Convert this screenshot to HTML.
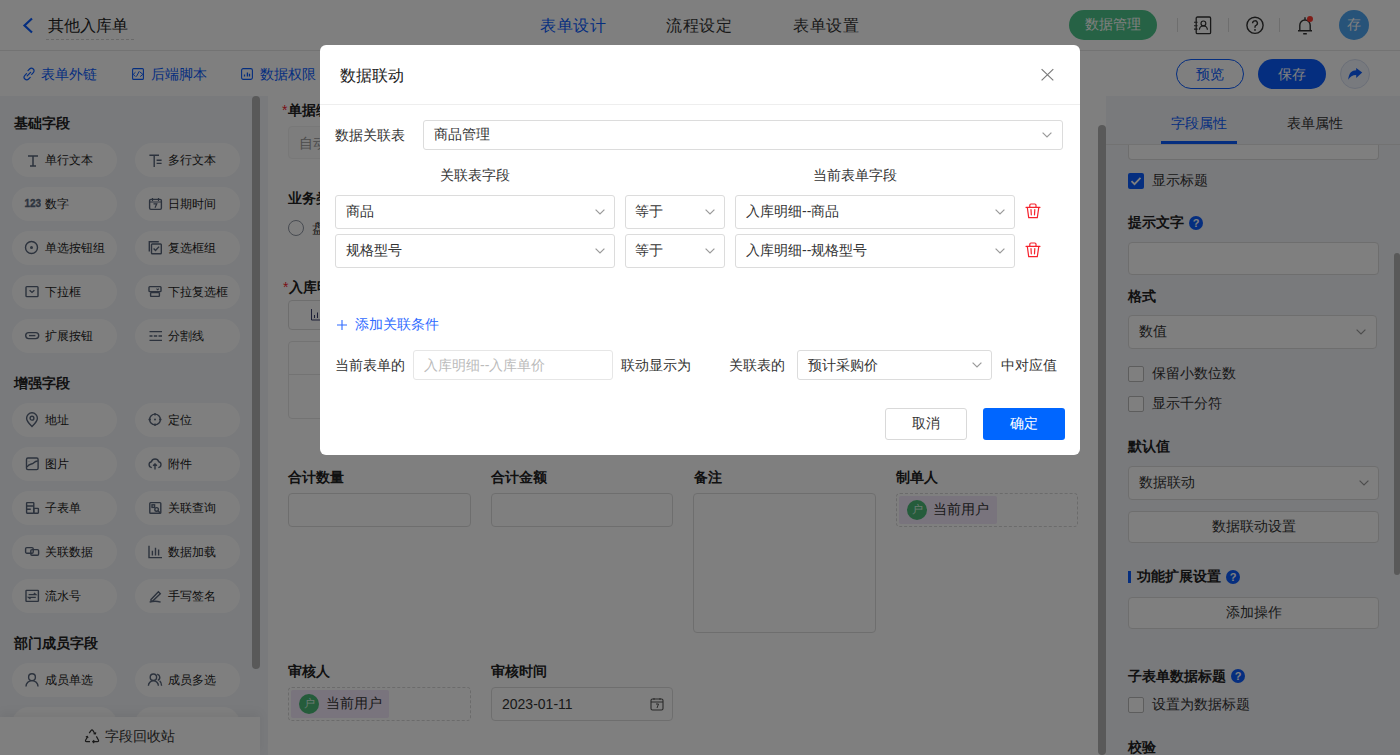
<!DOCTYPE html>
<html><head><meta charset="utf-8">
<style>
*{box-sizing:border-box;margin:0;padding:0}
html,body{width:1400px;height:755px;overflow:hidden;background:#fff;font-family:"Liberation Sans",sans-serif;color:#333}
.a{position:absolute}
.t{position:absolute;white-space:nowrap;line-height:1}
.b{font-weight:bold}
#hdr{left:0;top:0;width:1400px;height:51px;background:#fff;border-bottom:1px solid #e6e6e6}
#tb{left:0;top:51px;width:1400px;height:45px;background:#fff}
#lp{left:0;top:96px;width:268px;height:659px;background:#f2f4f8}
#cp{left:268px;top:96px;width:838px;height:659px;background:#fff}
#rp{left:1106px;top:96px;width:294px;height:659px;background:#f2f4f8}
.pill{position:absolute;width:105px;height:34px;border-radius:17px;background:#fff}
.pill .ic{position:absolute;left:12px;top:9px}
.pill span{position:absolute;left:33px;top:11px;font-size:12px;line-height:12px;color:#222;white-space:nowrap}
.sec{position:absolute;left:14px;font-size:14px;line-height:14px;font-weight:bold;color:#222}
.inp{position:absolute;border:1px solid #ddd;border-radius:4px;background:#fff}
.mask{position:absolute;left:0;top:0;width:1400px;height:755px;background:rgba(0,0,0,.5)}
#modal{left:320px;top:45px;width:760px;height:410px;background:#fff;border-radius:6px}
.sel{position:absolute;border:1px solid #dcdcdc;border-radius:3px;background:#fff}
.chev{position:absolute;width:10px;height:6px}
.qm{width:14px;height:14px;border-radius:7px;background:#0a5cff}
.qm:after{content:"?";position:absolute;left:0;top:1px;width:14px;text-align:center;font-size:11px;line-height:12px;font-weight:bold;color:#fff}
</style></head><body>
<!-- HEADER -->
<div id="hdr" class="a">
  <svg class="a" style="left:22px;top:17px" width="12" height="17" viewBox="0 0 12 17"><path d="M10 1.5 L2.5 8.5 L10 15.5" fill="none" stroke="#0a5cff" stroke-width="2.2"/></svg>
  <div class="t" style="left:48px;top:18px;font-size:16px;line-height:16px;color:#222">其他入库单</div>
  <div class="a" style="left:46px;top:39px;width:88px;border-top:1px dashed #d2d2d2"></div>
  <div class="t" style="left:540px;top:18px;font-size:16px;line-height:16px;letter-spacing:.5px;color:#0a5cff">表单设计</div>
  <div class="t" style="left:666px;top:18px;font-size:16px;line-height:16px;letter-spacing:.5px;color:#333">流程设定</div>
  <div class="t" style="left:793px;top:18px;font-size:16px;line-height:16px;letter-spacing:.5px;color:#333">表单设置</div>
  <div class="a" style="left:1069px;top:10px;width:88px;height:30px;border-radius:15px;background:#4cc58a"></div>
  <div class="t" style="left:1085px;top:17px;font-size:14px;line-height:14px;color:#fff">数据管理</div>
  <div class="a" style="left:1177px;top:18px;width:1px;height:14px;background:#ddd"></div>
  <div class="a" style="left:1228px;top:18px;width:1px;height:14px;background:#ddd"></div>
  <div class="a" style="left:1279px;top:18px;width:1px;height:14px;background:#ddd"></div>
  <svg class="a" style="left:1193px;top:15px" width="19" height="20" viewBox="0 0 19 20" fill="none" stroke="#333"><rect x="3.2" y="2" width="14.4" height="16.7" rx="1.2" stroke-width="1.3"/><path d="M1 7.3h3.6M1 10.7h3.6M1 14.1h3.6" stroke-width="1.1"/><circle cx="10.4" cy="8.4" r="2.4" stroke-width="1.2"/><path d="M6.4 14.8a4 4 0 0 1 8 0" stroke-width="1.2"/></svg>
  <svg class="a" style="left:1245px;top:16px" width="19" height="19" viewBox="0 0 19 19" fill="none" stroke="#333" stroke-width="1.4"><circle cx="10" cy="9.3" r="8.1"/><path d="M7.6 7.2a2.4 2.4 0 1 1 3.4 2.2c-.7.3-1 .8-1 1.5v.8"/><circle cx="10" cy="13.9" r=".9" fill="#333" stroke="none"/></svg>
  <svg class="a" style="left:1297px;top:15px" width="18" height="20" viewBox="0 0 18 20" fill="none" stroke="#333" stroke-width="1.4"><path d="M1 15.7H15M2.8 15.7V10.2a5.2 5.2 0 0 1 10.4 0v5.5M8 2.2v2.4M6.2 18.7h3.6"/><circle cx="13" cy="4" r="3" fill="#ff3b30" stroke="none"/></svg>
  <div class="a" style="left:1339px;top:10px;width:30px;height:30px;border-radius:15px;background:#4ea6f2"></div>
  <div class="t" style="left:1347px;top:17px;font-size:14px;line-height:14px;color:#fff">存</div>
</div>
<!-- TOOLBAR -->
<div id="tb" class="a">
  <svg class="a" style="left:22px;top:16px" width="14" height="14" viewBox="0 0 14 14"><path d="M6 3.6l1.6-1.6a2.6 2.6 0 0 1 3.7 3.7L9.7 7.3M8.2 10.4L6.6 12a2.6 2.6 0 0 1-3.7-3.7L4.5 6.7M5.2 8.8l3.4-3.4" fill="none" stroke="#0a5cff" stroke-width="1.2" stroke-linecap="round"/></svg>
  <div class="t" style="left:41px;top:16px;font-size:14px;line-height:14px;color:#0a5cff">表单外链</div>
  <svg class="a" style="left:132px;top:17px" width="12" height="12" viewBox="0 0 12 12" fill="none" stroke="#0a5cff"><rect x=".6" y=".6" width="10.8" height="10.8" rx="1" stroke-width="1.1"/><path d="M3.5 4.2L1.2 6.4l2.3 2.2M7.3 3.2L4.4 8.6M7.9 3.9l3 2.5-2.7 2.2" stroke-width="1"/></svg>
  <div class="t" style="left:151px;top:16px;font-size:14px;line-height:14px;color:#0a5cff">后端脚本</div>
  <svg class="a" style="left:241px;top:17px" width="12" height="12" viewBox="0 0 12 12" fill="none" stroke="#0a5cff"><rect x=".6" y=".6" width="10.8" height="10.8" rx="1.6" stroke-width="1.1"/><path d="M3.5 8.6V6.4M6.4 8.6V4.4M8.5 8.6V5.8" stroke-width="1.3"/></svg>
  <div class="t" style="left:260px;top:16px;font-size:14px;line-height:14px;color:#0a5cff">数据权限</div>
  <div class="a" style="left:1176px;top:8px;width:68px;height:30px;border-radius:15px;border:1px solid #0a5cff;background:#fff"></div>
  <div class="t" style="left:1196px;top:16px;font-size:14px;line-height:14px;color:#0a5cff">预览</div>
  <div class="a" style="left:1258px;top:8px;width:68px;height:30px;border-radius:15px;background:#0a5cff"></div>
  <div class="t" style="left:1278px;top:16px;font-size:14px;line-height:14px;color:#fff">保存</div>
  <div class="a" style="left:1340px;top:8px;width:30px;height:30px;border-radius:15px;background:#f0f4fc;border:1px solid #d6def0"></div><svg class="a" style="left:1340px;top:8px" width="30" height="30" viewBox="0 0 30 30"><path d="M22.2 13.6L16.2 9v2.3C12 11.5 9 13.5 8.2 20.8 10 17.5 12.5 16 16.2 16v2.9z" fill="#0a5cff"/></svg>
</div>
<!-- LEFT PANEL -->
<div id="lp" class="a">
  <div class="sec" style="top:20px">基础字段</div>
  <div class="pill" style="left:12px;top:47px"><svg class="ic" width="16" height="16" viewBox="0 0 16 16" fill="none" stroke="#58657a" stroke-width="1.4"><path d="M4 4h10M9 4v10M6 14h6" stroke-width="1.5"/></svg><span>单行文本</span></div>
  <div class="pill" style="left:135px;top:47px"><svg class="ic" width="16" height="16" viewBox="0 0 16 16" fill="none" stroke="#58657a" stroke-width="1.4"><path d="M2.4 3.3h9.6M7.2 3.3V15M9.6 8.2h5M9.6 11.4h5" stroke-width="1.4"/></svg><span>多行文本</span></div>
  <div class="pill" style="left:12px;top:91px"><svg class="ic" width="17" height="16" viewBox="0 0 17 16"><text x="0.4" y="11.4" font-family="Liberation Sans" font-weight="bold" font-size="10" fill="#5c6a7e" stroke="#5c6a7e" stroke-width=".35">123</text></svg><span>数字</span></div>
  <div class="pill" style="left:135px;top:91px"><svg class="ic" width="16" height="16" viewBox="0 0 16 16" fill="none" stroke="#58657a" stroke-width="1.4"><rect x="2.6" y="3.4" width="11.8" height="10" rx="1.3"/><path d="M2.6 6h11.8M5.5 2v3M11.5 2v3M6.5 7.8h3.3L8 11.8" stroke-width="1.2"/></svg><span>日期时间</span></div>
  <div class="pill" style="left:12px;top:135px"><svg class="ic" width="16" height="16" viewBox="0 0 16 16" fill="none" stroke="#58657a" stroke-width="1.4"><circle cx="7.5" cy="7.5" r="6"/><circle cx="7.5" cy="7.5" r="1.5" fill="#5c6a7e" stroke="none"/></svg><span>单选按钮组</span></div>
  <div class="pill" style="left:135px;top:135px"><svg class="ic" width="16" height="16" viewBox="0 0 16 16" fill="none" stroke="#58657a" stroke-width="1.4"><path d="M2.3 11.5V1.8h9.5"/><rect x="4.5" y="4" width="9.8" height="9.8" rx="0.8"/><path d="M6.6 8.6l1.9 1.9 3.6-3.9"/></svg><span>复选框组</span></div>
  <div class="pill" style="left:12px;top:179px"><svg class="ic" width="16" height="16" viewBox="0 0 16 16" fill="none" stroke="#58657a" stroke-width="1.4"><rect x="2" y="2.6" width="12" height="10" rx="0.8"/><path d="M5.6 6.2L8 8.4l2.4-2.2"/></svg><span>下拉框</span></div>
  <div class="pill" style="left:135px;top:179px"><svg class="ic" width="16" height="16" viewBox="0 0 16 16" fill="none" stroke="#58657a" stroke-width="1.4"><rect x="2" y="2.6" width="12" height="5" rx="0.8"/><rect x="3.6" y="8.6" width="8.8" height="3.8" rx="0.6"/><path d="M9.5 4.6l1.2 1.2 1.2-1.2" stroke-width="1.1"/></svg><span>下拉复选框</span></div>
  <div class="pill" style="left:12px;top:223px"><svg class="ic" width="16" height="16" viewBox="0 0 16 16" fill="none" stroke="#58657a" stroke-width="1.4"><rect x="1.7" y="4.6" width="13" height="6" rx="3"/><path d="M5 7.6h6.4"/></svg><span>扩展按钮</span></div>
  <div class="pill" style="left:135px;top:223px"><svg class="ic" width="16" height="16" viewBox="0 0 16 16" fill="none" stroke="#58657a" stroke-width="1.4"><path d="M2.5 3.6h12.5M2.5 8h3M6.8 8h3.4M11.5 8h3.5M2.5 12.4h12.5"/></svg><span>分割线</span></div>
  <div class="sec" style="top:280px">增强字段</div>
  <div class="pill" style="left:12px;top:307px"><svg class="ic" width="16" height="16" viewBox="0 0 16 16" fill="none" stroke="#58657a" stroke-width="1.4"><path d="M8 14.6C5.5 12 2.6 9.2 2.6 6.2a5.4 5.4 0 0 1 10.8 0c0 3-2.9 5.8-5.4 8.4z"/><circle cx="8" cy="6.2" r="1.9"/></svg><span>地址</span></div>
  <div class="pill" style="left:135px;top:307px"><svg class="ic" width="16" height="16" viewBox="0 0 16 16" fill="none" stroke="#58657a" stroke-width="1.4"><circle cx="8" cy="7.5" r="5.4"/><path d="M8 1v2.4M8 11.6V14M1.5 7.5h2.4M12.1 7.5h2.4"/><circle cx="8" cy="7.5" r="1" fill="#5c6a7e" stroke="none"/></svg><span>定位</span></div>
  <div class="pill" style="left:12px;top:351px"><svg class="ic" width="16" height="16" viewBox="0 0 16 16" fill="none" stroke="#58657a" stroke-width="1.4"><rect x="2.5" y="2" width="11.6" height="11.6" rx="1.4"/><path d="M3 11c2-3.5 5-2.5 6.5-4S12 5 13.8 5M5 5.6v.2"/></svg><span>图片</span></div>
  <div class="pill" style="left:135px;top:351px"><svg class="ic" width="16" height="16" viewBox="0 0 16 16" fill="none" stroke="#58657a" stroke-width="1.4"><path d="M4.8 11.6a3 3 0 0 1-.4-5.9 3.8 3.8 0 0 1 7.3 0 3 3 0 0 1-.4 5.9M8 13.4V8M6.1 9.8L8 7.9l1.9 1.9"/></svg><span>附件</span></div>
  <div class="pill" style="left:12px;top:395px"><svg class="ic" width="16" height="16" viewBox="0 0 16 16" fill="none" stroke="#58657a" stroke-width="1.4"><rect x="2.6" y="2.6" width="7.2" height="10.6" rx="0.6"/><path d="M2.6 6h7.2M2.6 9.2h4.2"/><rect x="9.8" y="8.4" width="4.6" height="4.8" rx="0.6"/></svg><span>子表单</span></div>
  <div class="pill" style="left:135px;top:395px"><svg class="ic" width="16" height="16" viewBox="0 0 16 16" fill="none" stroke="#58657a" stroke-width="1.4"><rect x="2.8" y="2.6" width="11" height="10.6" rx="0.8"/><rect x="5" y="4.8" width="2.6" height="2.6"/><circle cx="9.6" cy="9.4" r="1.8"/><path d="M11 10.8l2 2"/></svg><span>关联查询</span></div>
  <div class="pill" style="left:12px;top:439px"><svg class="ic" width="16" height="16" viewBox="0 0 16 16" fill="none" stroke="#58657a" stroke-width="1.4"><rect x="1.6" y="3.6" width="7.6" height="5.6" rx="1.2"/><rect x="6.8" y="5.6" width="7.8" height="5.6" rx="1.2"/></svg><span>关联数据</span></div>
  <div class="pill" style="left:135px;top:439px"><svg class="ic" width="16" height="16" viewBox="0 0 16 16" fill="none" stroke="#58657a" stroke-width="1.4"><path d="M2 1.8v11.8h13M5.4 11.4V6.8M8.5 11.4V3.8M11.6 11.4V5.6"/></svg><span>数据加载</span></div>
  <div class="pill" style="left:12px;top:483px"><svg class="ic" width="16" height="16" viewBox="0 0 16 16" fill="none" stroke="#58657a" stroke-width="1.4"><rect x="2" y="2.4" width="12.4" height="11" rx="0.6"/><path d="M4.6 6.6h7.2L9.9 4.9M11.8 9.4H4.6l1.9 1.7" stroke-width="1.4"/></svg><span>流水号</span></div>
  <div class="pill" style="left:135px;top:483px"><svg class="ic" width="16" height="16" viewBox="0 0 16 16" fill="none" stroke="#58657a" stroke-width="1.4"><path d="M4 11.4l7.4-7.6 1.9 1.9-7.6 7.4H4z"/><path d="M2.6 14.2c3.5-1.2 7.5-1.2 11 0"/></svg><span>手写签名</span></div>
  <div class="sec" style="top:540px">部门成员字段</div>
  <div class="pill" style="left:12px;top:567px"><svg class="ic" width="16" height="16" viewBox="0 0 16 16" fill="none" stroke="#58657a" stroke-width="1.4"><circle cx="8" cy="5.2" r="3.4"/><path d="M2 14.6a6 6 0 0 1 12 0"/></svg><span>成员单选</span></div>
  <div class="pill" style="left:135px;top:567px"><svg class="ic" width="16" height="16" viewBox="0 0 16 16" fill="none" stroke="#58657a" stroke-width="1.4"><circle cx="6.4" cy="5.2" r="3.2"/><path d="M1.4 13.8a5 5 0 0 1 10 0M10.2 2.2a3.2 3.2 0 0 1 .6 6.1M12.6 8.8c1.3.9 2 2.6 2 5"/></svg><span>成员多选</span></div>
  <div class="pill" style="left:12px;top:611px"><span></span></div>
  <div class="pill" style="left:135px;top:611px"><span></span></div>
  <div class="a" style="left:252px;top:0;width:8px;height:573px;border-radius:4px;background:#b3b3b3"></div>
  <div class="a" style="left:0;top:621px;width:260px;height:38px;background:#fff;box-shadow:0 -4px 10px rgba(0,0,0,.06)"></div>
  <svg class="a" style="left:84px;top:632px" width="16" height="16" viewBox="0 0 16 16" fill="none" stroke="#333" stroke-width="1.2" stroke-linejoin="round"><path d="M5.2 5.2L7 2.6Q8 1.2 9 2.6l1.9 3.1"/><path d="M9.6 5.6l1.7.4.5-1.7"/><path d="M12.4 8.4l2 3.6q.7 1.6-1 1.6H8.7"/><path d="M10.2 12.2l-1.5 1.4 1.5 1.4"/><path d="M6 13.6H2.6q-1.7 0-.9-1.6l1.7-3"/><path d="M1.8 9l1.6-.6.6 1.6"/></svg><div class="t" style="left:105px;top:633px;font-size:14px;line-height:14px;color:#333">字段回收站</div>
</div>
<!-- CENTER -->
<div id="cp" class="a"></div>
<div class="t" style="left:282px;top:103px;font-size:14px;color:#f5222d">*</div>
<div class="t b" style="left:288px;top:103px;font-size:14px;color:#222">单据编号</div>
<div class="a" style="left:288px;top:126px;width:500px;height:33px;border-radius:4px;background:#fafafa;border:1px solid #f0f0f0"></div>
<div class="t" style="left:299px;top:136px;font-size:14px;color:#999">自动生成</div>
<div class="t b" style="left:288px;top:191px;font-size:14px;color:#222">业务类型</div>
<div class="a" style="left:288px;top:220px;width:16px;height:16px;border-radius:8px;border:1px solid #8f96a3;background:#fff"></div>
<div class="t" style="left:312px;top:221px;font-size:14px;color:#333">盘盈入库</div>
<div class="t" style="left:283px;top:280px;font-size:14px;color:#f5222d">*</div>
<div class="t b" style="left:289px;top:280px;font-size:14px;color:#222">入库明细</div>
<div class="a" style="left:288px;top:300px;width:200px;height:30px;border-radius:4px;border:1px solid #ddd"></div>
<svg class="a" style="left:310px;top:308px" width="13" height="13" viewBox="0 0 13 13"><path d="M1.5 1v11h11M4.5 10V7M7.5 10V4.5M10.5 10V6.5" fill="none" stroke="#3a3f6e" stroke-width="1"/></svg>
<div class="a" style="left:288px;top:341px;width:780px;height:78px;border:1px solid #e6e6e6;border-radius:4px"></div>
<div class="a" style="left:288px;top:374px;width:780px;height:1px;background:#e6e6e6"></div>
<div class="t b" style="left:288px;top:470px;font-size:14px;color:#222">合计数量</div>
<div class="t b" style="left:491px;top:470px;font-size:14px;color:#222">合计金额</div>
<div class="t b" style="left:694px;top:470px;font-size:14px;color:#222">备注</div>
<div class="t b" style="left:896px;top:470px;font-size:14px;color:#222">制单人</div>
<div class="inp" style="left:288px;top:493px;width:183px;height:34px"></div>
<div class="inp" style="left:491px;top:493px;width:182px;height:34px"></div>
<div class="inp" style="left:693px;top:493px;width:183px;height:140px"></div>
<div class="a" style="left:896px;top:493px;width:182px;height:34px;border:1px dashed #d6d6d6;border-radius:4px"></div>
<div class="a" style="left:899px;top:496px;width:98px;height:28px;background:#f2e8fb;border-radius:2px"></div>
<div class="a" style="left:907px;top:500px;width:20px;height:20px;border-radius:10px;background:#4ab877"></div>
<div class="t" style="left:912px;top:504px;font-size:11px;color:#d8f5e4">户</div>
<div class="t" style="left:933px;top:502px;font-size:14px;color:#333">当前用户</div>
<div class="t b" style="left:288px;top:664px;font-size:14px;color:#222">审核人</div>
<div class="t b" style="left:491px;top:664px;font-size:14px;color:#222">审核时间</div>
<div class="a" style="left:288px;top:687px;width:183px;height:34px;border:1px dashed #d6d6d6;border-radius:4px"></div>
<div class="a" style="left:291px;top:690px;width:98px;height:28px;background:#f2e8fb;border-radius:2px"></div>
<div class="a" style="left:299px;top:694px;width:20px;height:20px;border-radius:10px;background:#4ab877"></div>
<div class="t" style="left:304px;top:698px;font-size:11px;color:#d8f5e4">户</div>
<div class="t" style="left:326px;top:696px;font-size:14px;color:#333">当前用户</div>
<div class="inp" style="left:491px;top:687px;width:182px;height:34px"></div>
<div class="t" style="left:502px;top:697px;font-size:14px;color:#333">2023-01-11</div>
<svg class="a" style="left:650px;top:697px" width="14" height="14" viewBox="0 0 14 14"><rect x="1" y="2" width="12" height="11" rx="1.5" fill="none" stroke="#555" stroke-width="1.1"/><path d="M1 5h12M4 1v2M10 1v2M6 7h2.5L7 11" fill="none" stroke="#555" stroke-width="1"/></svg>
<div class="a" style="left:1098px;top:125px;width:8px;height:630px;border-radius:4px;background:#b3b3b3"></div>
<!-- RIGHT PANEL -->
<div id="rp" class="a"></div>
<div class="inp" style="left:1128px;top:126px;width:251px;height:34px;border-top:0;border-radius:0 0 4px 4px"></div>
<div class="a" style="left:1106px;top:96px;width:288px;height:49px;background:#f2f4f8"></div>
<div class="t" style="left:1171px;top:116px;font-size:14px;color:#0a5cff">字段属性</div>
<div class="t" style="left:1287px;top:116px;font-size:14px;color:#333">表单属性</div>
<div class="a" style="left:1106px;top:144px;width:294px;height:1px;background:#e4e4e4"></div>
<div class="a" style="left:1161px;top:141px;width:76px;height:3px;background:#0a5cff"></div>
<div class="a" style="left:1128px;top:173px;width:16px;height:16px;border-radius:2px;background:#0a5cff"></div>
<svg class="a" style="left:1128px;top:173px" width="16" height="16" viewBox="0 0 16 16"><path d="M3.5 8.2l3 3 6-6.4" fill="none" stroke="#fff" stroke-width="1.8"/></svg>
<div class="t" style="left:1152px;top:173px;font-size:14px;color:#333">显示标题</div>
<div class="t b" style="left:1128px;top:215px;font-size:14px;color:#222">提示文字</div>
<div class="a qm" style="left:1189px;top:216px"></div>
<div class="inp" style="left:1128px;top:242px;width:251px;height:33px"></div>
<div class="t b" style="left:1128px;top:289px;font-size:14px;color:#222">格式</div>
<div class="inp" style="left:1128px;top:315px;width:249px;height:34px"></div>
<div class="t" style="left:1139px;top:324px;font-size:14px;color:#333">数值</div>
<svg class="chev" style="left:1356px;top:329px" viewBox="0 0 10 6"><path d="M.6 .6L5 5 9.4.6" fill="none" stroke="#9a9a9a" stroke-width="1.2"/></svg>
<div class="a" style="left:1128px;top:366px;width:16px;height:16px;border-radius:2px;border:1px solid #bbb;background:#fff"></div>
<div class="t" style="left:1152px;top:366px;font-size:14px;color:#333">保留小数位数</div>
<div class="a" style="left:1128px;top:396px;width:16px;height:16px;border-radius:2px;border:1px solid #bbb;background:#fff"></div>
<div class="t" style="left:1152px;top:396px;font-size:14px;color:#333">显示千分符</div>
<div class="t b" style="left:1128px;top:439px;font-size:14px;color:#222">默认值</div>
<div class="inp" style="left:1128px;top:466px;width:251px;height:34px"></div>
<div class="t" style="left:1139px;top:475px;font-size:14px;color:#333">数据联动</div>
<svg class="chev" style="left:1359px;top:480px" viewBox="0 0 10 6"><path d="M.6 .6L5 5 9.4.6" fill="none" stroke="#9a9a9a" stroke-width="1.2"/></svg>
<div class="inp" style="left:1128px;top:511px;width:251px;height:32px"></div>
<div class="t" style="left:1212px;top:519px;font-size:14px;color:#333">数据联动设置</div>
<div class="a" style="left:1128px;top:571px;width:3px;height:12px;background:#0a5cff"></div>
<div class="t b" style="left:1137px;top:569px;font-size:14px;color:#222">功能扩展设置</div>
<div class="a qm" style="left:1226px;top:570px"></div>
<div class="inp" style="left:1128px;top:597px;width:251px;height:32px"></div>
<div class="t" style="left:1226px;top:605px;font-size:14px;color:#333">添加操作</div>
<div class="t b" style="left:1128px;top:669px;font-size:14px;color:#222">子表单数据标题</div>
<div class="a qm" style="left:1231px;top:669px"></div>
<div class="a" style="left:1128px;top:697px;width:16px;height:16px;border-radius:2px;border:1px solid #bbb;background:#fff"></div>
<div class="t" style="left:1152px;top:697px;font-size:14px;color:#333">设置为数据标题</div>
<div class="t b" style="left:1128px;top:740px;font-size:14px;color:#222">校验</div>
<div class="a" style="left:1394px;top:253px;width:6px;height:322px;border-radius:3px;background:#b3b3b3"></div>

<div class="mask"></div>
<!-- MODAL -->
<div id="modal" class="a">
  <div class="t" style="left:20px;top:23px;font-size:16px;line-height:16px;color:#222">数据联动</div>
  <svg class="a" style="left:720px;top:23px" width="15" height="14" viewBox="0 0 15 14"><path d="M1.6 1.1L13.3 12.4M13.3 1.1L1.6 12.4" stroke="#7a7a7a" stroke-width="1.2"/></svg>
  <div class="a" style="left:0;top:59px;width:760px;height:1px;background:#eee"></div>
  <div class="t" style="left:15px;top:83px;font-size:14px;color:#333">数据关联表</div>
  <div class="sel" style="left:103px;top:75px;width:640px;height:30px"></div>
  <div class="t" style="left:114px;top:82px;font-size:14px;color:#333">商品管理</div>
  <svg class="chev" style="left:722px;top:87px" viewBox="0 0 10 6"><path d="M.6 .6L5 5 9.4.6" fill="none" stroke="#9a9a9a" stroke-width="1.2"/></svg>
  <div class="t" style="left:120px;top:123px;font-size:14px;color:#333">关联表字段</div>
  <div class="t" style="left:493px;top:123px;font-size:14px;color:#333">当前表单字段</div>
  <div class="sel" style="left:15px;top:150px;width:280px;height:34px"></div>
  <div class="sel" style="left:305px;top:150px;width:100px;height:34px"></div>
  <div class="sel" style="left:415px;top:150px;width:280px;height:34px"></div>
  <div class="sel" style="left:15px;top:189px;width:280px;height:34px"></div>
  <div class="sel" style="left:305px;top:189px;width:100px;height:34px"></div>
  <div class="sel" style="left:415px;top:189px;width:280px;height:34px"></div>
  <div class="t" style="left:26px;top:159px;font-size:14px;color:#333">商品</div>
  <div class="t" style="left:315px;top:159px;font-size:14px;color:#333">等于</div>
  <div class="t" style="left:426px;top:159px;font-size:14px;color:#333">入库明细--商品</div>
  <div class="t" style="left:26px;top:198px;font-size:14px;color:#333">规格型号</div>
  <div class="t" style="left:315px;top:198px;font-size:14px;color:#333">等于</div>
  <div class="t" style="left:426px;top:198px;font-size:14px;color:#333">入库明细--规格型号</div>
  <svg class="chev" style="left:275px;top:164px" viewBox="0 0 10 6"><path d="M.6 .6L5 5 9.4.6" fill="none" stroke="#9a9a9a" stroke-width="1.2"/></svg>
  <svg class="chev" style="left:385px;top:164px" viewBox="0 0 10 6"><path d="M.6 .6L5 5 9.4.6" fill="none" stroke="#9a9a9a" stroke-width="1.2"/></svg>
  <svg class="chev" style="left:675px;top:164px" viewBox="0 0 10 6"><path d="M.6 .6L5 5 9.4.6" fill="none" stroke="#9a9a9a" stroke-width="1.2"/></svg>
  <svg class="chev" style="left:275px;top:203px" viewBox="0 0 10 6"><path d="M.6 .6L5 5 9.4.6" fill="none" stroke="#9a9a9a" stroke-width="1.2"/></svg>
  <svg class="chev" style="left:385px;top:203px" viewBox="0 0 10 6"><path d="M.6 .6L5 5 9.4.6" fill="none" stroke="#9a9a9a" stroke-width="1.2"/></svg>
  <svg class="chev" style="left:675px;top:203px" viewBox="0 0 10 6"><path d="M.6 .6L5 5 9.4.6" fill="none" stroke="#9a9a9a" stroke-width="1.2"/></svg>
  <svg class="a trash" style="left:705px;top:158px" width="16" height="16" viewBox="0 0 16 16"><path d="M1 4.3h14M4.8 4.3V2.2Q4.8 1 6 1h3.8Q11 1 11 2.2v2.1M2.3 4.3l1.4 10.4h8.6L13.8 4.3M6 6.6l.3 5.2M9.8 6.6l-.3 5.2" fill="none" stroke="#f5222d" stroke-width="1.2" stroke-linejoin="round" stroke-linecap="round"/></svg>
  <svg class="a trash" style="left:705px;top:197px" width="16" height="16" viewBox="0 0 16 16"><path d="M1 4.3h14M4.8 4.3V2.2Q4.8 1 6 1h3.8Q11 1 11 2.2v2.1M2.3 4.3l1.4 10.4h8.6L13.8 4.3M6 6.6l.3 5.2M9.8 6.6l-.3 5.2" fill="none" stroke="#f5222d" stroke-width="1.2" stroke-linejoin="round" stroke-linecap="round"/></svg>
  <svg class="a" style="left:17px;top:275px" width="10" height="10" viewBox="0 0 10 10"><path d="M5 0v10M0 5h10" stroke="#2f6bff" stroke-width="1.1"/></svg>
  <div class="t" style="left:35px;top:272px;font-size:14px;color:#2f6bff">添加关联条件</div>
  <div class="t" style="left:15px;top:313px;font-size:14px;color:#333">当前表单的</div>
  <div class="sel" style="left:93px;top:305px;width:200px;height:30px;border-color:#e6e6e6"></div>
  <div class="t" style="left:104px;top:313px;font-size:14px;color:#bbb">入库明细--入库单价</div>
  <div class="t" style="left:301px;top:313px;font-size:14px;color:#333">联动显示为</div>
  <div class="t" style="left:409px;top:313px;font-size:14px;color:#333">关联表的</div>
  <div class="sel" style="left:477px;top:305px;width:195px;height:30px"></div>
  <div class="t" style="left:488px;top:313px;font-size:14px;color:#333">预计采购价</div>
  <svg class="chev" style="left:652px;top:317px" viewBox="0 0 10 6"><path d="M.6 .6L5 5 9.4.6" fill="none" stroke="#9a9a9a" stroke-width="1.2"/></svg>
  <div class="t" style="left:681px;top:313px;font-size:14px;color:#333">中对应值</div>
  <div class="a" style="left:565px;top:363px;width:82px;height:32px;border:1px solid #d9d9d9;border-radius:3px"></div>
  <div class="t" style="left:592px;top:371px;font-size:14px;color:#333">取消</div>
  <div class="a" style="left:663px;top:363px;width:82px;height:32px;background:#0066ff;border-radius:3px"></div>
  <div class="t" style="left:690px;top:371px;font-size:14px;color:#fff">确定</div>
</div>
</body></html>
